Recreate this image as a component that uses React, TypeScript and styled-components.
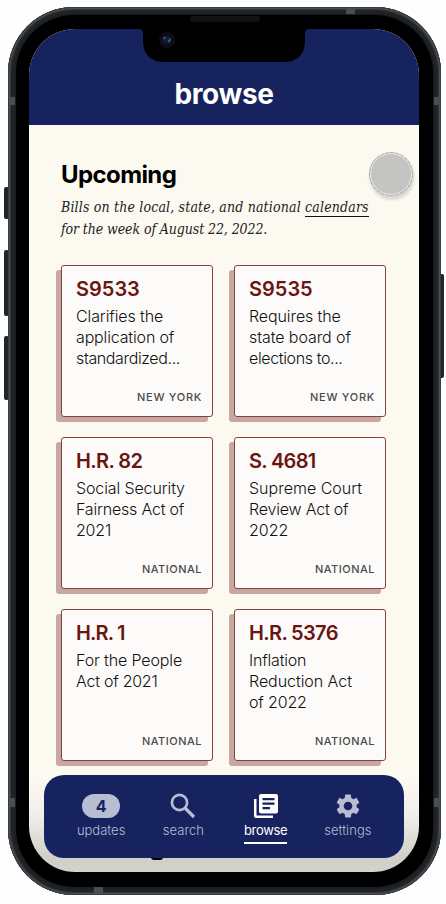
import React from "react";
import styled, { createGlobalStyle } from "styled-components";

const navy = "#16235f";
const maroon = "#6b1512";

const GlobalStyle = createGlobalStyle`
  * { box-sizing: border-box; }
  body {
    margin: 0;
    background: #fefefe;
    font-family: Inter, "Liberation Sans", sans-serif;
    overflow: hidden;
  }
`;

const Stage = styled.main`
  position: relative;
  width: 446px;
  height: 904px;
  padding: 7px 0 0 8px;
`;

const SideButton = styled.i<{ $side: "left" | "right"; $top: number; $height: number }>`
  position: absolute;
  ${(p) => (p.$side === "left" ? "left: 4px;" : "left: 439px;")}
  top: ${(p) => p.$top}px;
  width: 5px;
  height: ${(p) => p.$height}px;
  border-radius: 2px;
  background: #222528;
`;

const Frame = styled.div`
  position: relative;
  width: 433px;
  height: 888px;
  padding: 8px;
  border-radius: 66px;
  background: #1c1f22;
  box-shadow: inset 0 0 0 1px #3a3d40, inset 0 0 0 2px #4a4d52, inset 0 0 0 3px #34373a,
    inset 0 0 0 6px #202427;
`;

const Bezel = styled.div`
  width: 417px;
  height: 872px;
  padding: 14px 14px 0 13px;
  border-radius: 58px;
  background: #000;
`;

const Antenna = styled.i<{ $x: number; $y: number; $w: number; $h: number }>`
  position: absolute;
  left: ${(p) => p.$x}px;
  top: ${(p) => p.$y}px;
  width: ${(p) => p.$w}px;
  height: ${(p) => p.$h}px;
  background: #4b4e50;
`;

const Screen = styled.div`
  position: relative;
  width: 390px;
  height: 843px;
  display: flex;
  flex-direction: column;
  overflow: hidden;
  border-radius: 46px;
  background: linear-gradient(#fcf9f1 0 750px, #f1efe8 785px, #d0cfca 828px, #d2d1cc 843px);
`;

const Header = styled.header`
  flex: none;
  height: 96px;
  padding-top: 47px;
  text-align: center;
  background: ${navy};
  color: #fff;
`;

const PageTitle = styled.h1`
  margin: 0;
  font-size: 28px;
  line-height: 37px;
  font-weight: 700;
  letter-spacing: -0.35px;
`;

const Notch = styled.svg`
  position: absolute;
  left: 131px;
  top: 7px;
  width: 170px;
  height: 50px;
`;

const Content = styled.section`
  padding: 33px 32px 0;
`;

const SectionTitle = styled.h2`
  margin: 0;
  font-size: 24px;
  line-height: 34px;
  font-weight: 700;
  letter-spacing: -0.6px;
  color: #000;
`;

const Intro = styled.p`
  margin: 4px 0 25px;
  font: italic 14px/22px "DejaVu Serif Condensed", "DejaVu Serif", serif;
  color: #222;
  white-space: nowrap;
`;

const IntroLine = styled.span<{ $spacing: number }>`
  display: block;
  height: 22px;
  letter-spacing: ${(p) => p.$spacing}px;
`;

const CalendarLink = styled.a`
  display: inline-block;
  line-height: 17px;
  border-bottom: 1px solid #111;
`;

const BillGrid = styled.div`
  display: grid;
  grid-template-columns: 152px 152px;
  gap: 20px 21px;
`;

const BillCard = styled.article`
  height: 152px;
  padding: 10px 10px 10px 14px;
  display: flex;
  flex-direction: column;
  border: 1px solid #87413f;
  border-radius: 3px;
  background: #fcfbf9;
  box-shadow: -5px 5px 0 #c8a7a3;
`;

const BillNumber = styled.h3<{ $spacing: number }>`
  margin: 0 0 4px;
  font-size: 20px;
  line-height: 26px;
  font-weight: 600;
  letter-spacing: ${(p) => p.$spacing}px;
  color: ${maroon};
`;

const BillLine = styled.span<{ $spacing: number }>`
  font-size: 16px;
  line-height: 21px;
  font-weight: 300;
  letter-spacing: ${(p) => p.$spacing}px;
  color: #111;
  white-space: nowrap;
`;

const Place = styled.span<{ $spacing: number }>`
  margin-top: auto;
  align-self: flex-end;
  font-size: 11px;
  line-height: 18px;
  font-weight: 500;
  letter-spacing: ${(p) => p.$spacing}px;
  color: #4a4a4a;
`;

const NavBar = styled.nav`
  position: absolute;
  left: 15px;
  top: 746px;
  width: 360px;
  height: 83px;
  padding: 18px 15px 0 16px;
  display: grid;
  grid-template-columns: repeat(4, 82.25px);
  border-radius: 20px;
  background: ${navy};
`;

const NavItem = styled.a<{ $active?: boolean }>`
  display: flex;
  flex-direction: column;
  align-items: center;
  color: ${(p) => (p.$active ? "#fff" : "#b9bdd1")};
`;

const NavIcon = styled.svg`
  width: 30px;
  height: 26px;
  fill: currentColor;
`;

const CountPill = styled.b`
  width: 38px;
  height: 24px;
  margin: 1px 0;
  border-radius: 12px;
  background: #b9bdd1;
  color: ${navy};
  font-size: 16px;
  line-height: 25px;
  text-align: center;
`;

const NavLabel = styled.span<{ $active?: boolean; $spacing: number }>`
  margin-top: 2px;
  padding-bottom: 3px;
  font-size: 13px;
  line-height: 18px;
  font-weight: ${(p) => (p.$active ? 400 : 300)};
  letter-spacing: ${(p) => p.$spacing}px;
  border-bottom: 2px solid ${(p) => (p.$active ? "#fff" : "transparent")};
`;

const ScrolledHeading = styled.i`
  position: absolute;
  left: 122px;
  top: 826px;
  width: 12px;
  height: 5px;
  border-radius: 0 0 3px 3px;
  background: #000;
`;

const TouchPoint = styled.i`
  position: absolute;
  left: 369px;
  top: 152px;
  width: 44px;
  height: 44px;
  border: 1px dashed #a5a5a5;
  border-radius: 50%;
  background: #c4c4c3;
  box-shadow: inset 0 0 0 1px #e8e8e6, 1px 4px 3px #d9d7d2;
`;

type Line = [string, number];
type Bill = { id: string; idSpacing: number; lines: Line[]; place: string };

const bills: Bill[] = [
  { id: "S9533", idSpacing: 0, lines: [["Clarifies the", -0.1], ["application of", -0.15], ["standardized...", -0.37]], place: "NEW YORK" },
  { id: "S9535", idSpacing: 0, lines: [["Requires the", -0.1], ["state board of", -0.08], ["elections to...", -0.37]], place: "NEW YORK" },
  { id: "H.R. 82", idSpacing: -0.6, lines: [["Social Security", -0.12], ["Fairness Act of", -0.2], ["2021", -0.2]], place: "NATIONAL" },
  { id: "S. 4681", idSpacing: -0.7, lines: [["Supreme Court", 0], ["Review Act of", -0.2], ["2022", 0]], place: "NATIONAL" },
  { id: "H.R. 1", idSpacing: -0.85, lines: [["For the People", -0.13], ["Act of 2021", -0.25]], place: "NATIONAL" },
  { id: "H.R. 5376", idSpacing: -0.65, lines: [["Inflation", -0.2], ["Reduction Act", -0.05], ["of 2022", -0.15]], place: "NATIONAL" },
];

export default function App() {
  return (
    <>
      <GlobalStyle />
      <Stage>
        <SideButton $side="left" $top={187} $height={32} />
        <SideButton $side="left" $top={250} $height={66} />
        <SideButton $side="left" $top={336} $height={64} />
        <SideButton $side="right" $top={274} $height={104} />
        <Frame>
          <Antenna $x={338} $y={1} $w={9} $h={6} />
          <Antenna $x={86} $y={880} $w={9} $h={6} />
          <Antenna $x={1} $y={90} $w={6} $h={8} />
          <Antenna $x={426} $y={90} $w={6} $h={8} />
          <Antenna $x={1} $y={791} $w={6} $h={9} />
          <Antenna $x={426} $y={791} $w={6} $h={9} />
          <Bezel>
            <Screen>
              <Header><PageTitle>browse</PageTitle></Header>
              <Content>
                <SectionTitle>Upcoming</SectionTitle>
                <Intro>
                  <IntroLine $spacing={0.165}>
                    Bills on the local, state, and national <CalendarLink>calendars</CalendarLink>
                  </IntroLine>
                  <IntroLine $spacing={-0.1}>for the week of August 22, 2022.</IntroLine>
                </Intro>
                <BillGrid>
                  {bills.map((bill) => (
                    <BillCard key={bill.id}>
                      <BillNumber $spacing={bill.idSpacing}>{bill.id}</BillNumber>
                      {bill.lines.map(([text, spacing]) => (
                        <BillLine key={text} $spacing={spacing}>{text}</BillLine>
                      ))}
                      <Place $spacing={bill.place === "NEW YORK" ? 0.7 : 0.5}>{bill.place}</Place>
                    </BillCard>
                  ))}
                </BillGrid>
              </Content>
              <ScrolledHeading />
              <NavBar>
                <NavItem>
                  <CountPill>4</CountPill>
                  <NavLabel $spacing={0}>updates</NavLabel>
                </NavItem>
                <NavItem>
                  <NavIcon viewBox="0 0 30 26">
                    <circle cx="11.500" cy="9.500" r="7.600" fill="none" stroke="currentColor" strokeWidth="2.700" />
                    <path d="M16.500 14.500 L26 24" stroke="currentColor" strokeWidth="3.200" />
                  </NavIcon>
                  <NavLabel $spacing={0.1}>search</NavLabel>
                </NavItem>
                <NavItem $active>
                  <NavIcon viewBox="0 0 30 26">
                    <path d="M3 6h2.5v16.5H22V25H5a2 2 0 0 1-2-2z" />
                    <path fillRule="evenodd" d="M10 1h15a2 2 0 0 1 2 2v15.500a2 2 0 0 1-2 2H10a2 2 0 0 1-2-2V3a2 2 0 0 1 2-2zM11.500 5v2.200h12V5zm0 4.500v2.200h12V9.500zm0 4.500v2.200h7.500V14z" />
                  </NavIcon>
                  <NavLabel $active $spacing={-0.3}>browse</NavLabel>
                </NavItem>
                <NavItem>
                  <NavIcon viewBox="0 0 30 26">
                    <path transform="translate(.6 -1.4) scale(1.2)" d="M19.14 12.94c.04-.3.06-.61.06-.94 0-.32-.02-.64-.07-.94l2.03-1.58c.18-.14.23-.41.12-.61l-1.92-3.32c-.12-.22-.37-.29-.59-.22l-2.39.96c-.5-.38-1.03-.7-1.62-.94l-.36-2.54c-.04-.24-.24-.41-.48-.41h-3.84c-.24 0-.43.17-.47.41l-.36 2.54c-.59.24-1.13.57-1.62.94l-2.39-.96c-.22-.08-.47 0-.59.22L2.74 8.870c-.12.21-.08.47.12.61l2.03 1.58c-.05.3-.09.63-.09.94s.02.64.07.94l-2.03 1.58c-.18.14-.23.41-.12.61l1.92 3.32c.12.22.37.29.59.22l2.39-.96c.5.38 1.03.7 1.62.94l.36 2.54c.05.24.24.41.48.41h3.840c.24 0 .44-.17.47-.41l.36-2.540c.59-.24 1.130-.56 1.620-.94l2.390.96c.22.08.47 0 .59-.22l1.920-3.320c.12-.22.07-.47-.12-.61l-2.010-1.580zM12 15.600c-1.980 0-3.600-1.620-3.600-3.600s1.620-3.600 3.600-3.600 3.600 1.620 3.600 3.600-1.620 3.600-3.600 3.600z" />
                  </NavIcon>
                  <NavLabel $spacing={0.05}>settings</NavLabel>
                </NavItem>
              </NavBar>
            </Screen>
          </Bezel>
          <Notch viewBox="0 0 170 50">
            <path d="M0 15Q4 15 4 20V26Q4 48 26 48H144Q166 48 166 26V20Q166 15 170 15V10H0z" />
            <rect x="51" y="2" width="70" height="6" rx="3" fill="#111112" />
            <circle cx="28" cy="26" r="8" fill="#0b0e13" />
            <circle cx="28" cy="26" r="4" fill="#101b42" />
            <path d="M24.500 25l2-2M29.500 28l2-3" stroke="#52617d" strokeWidth="1.500" />
          </Notch>
        </Frame>
        <TouchPoint />
      </Stage>
    </>
  );
}
